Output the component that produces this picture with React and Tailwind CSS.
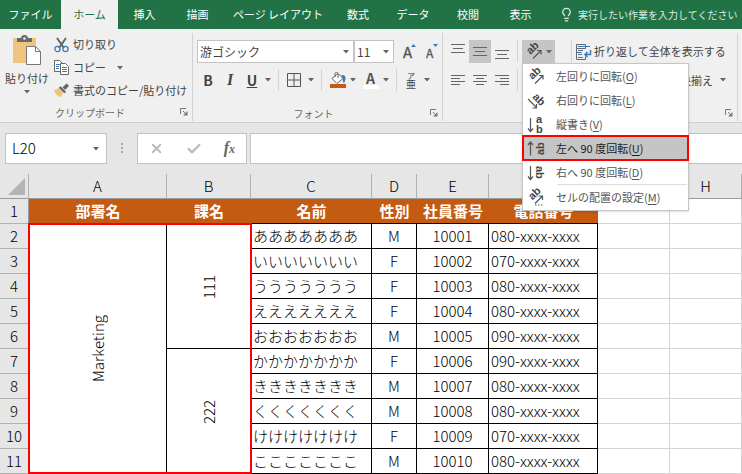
import React from 'react';
import { Check, X, Lightbulb } from 'lucide-react';

const tabs = ['ファイル', 'ホーム', '挿入', '描画', 'ページ レイアウト', '数式', 'データ', '校閲', '表示'];

const tabWidths = [
  'w-[61px]', 'w-[57px]', 'w-[53px]', 'w-[53px]', 'w-[108px]', 'w-[52px]', 'w-[58px]', 'w-[52px]', 'w-[53px]',
];

const rows = [
  { name: 'あああああああ', sex: 'M', no: '10001', tel: '080-xxxx-xxxx' },
  { name: 'いいいいいいい', sex: 'F', no: '10002', tel: '070-xxxx-xxxx' },
  { name: 'ううううううう', sex: 'F', no: '10003', tel: '080-xxxx-xxxx' },
  { name: 'えええええええ', sex: 'F', no: '10004', tel: '080-xxxx-xxxx' },
  { name: 'おおおおおおお', sex: 'M', no: '10005', tel: '090-xxxx-xxxx' },
  { name: 'かかかかかかか', sex: 'F', no: '10006', tel: '090-xxxx-xxxx' },
  { name: 'ききききききき', sex: 'M', no: '10007', tel: '080-xxxx-xxxx' },
  { name: 'くくくくくくく', sex: 'M', no: '10008', tel: '080-xxxx-xxxx' },
  { name: 'けけけけけけけ', sex: 'F', no: '10009', tel: '070-xxxx-xxxx' },
  { name: 'こここここここ', sex: 'M', no: '10010', tel: '080-xxxx-xxxx' },
];

const menuItems = [
  { icon: 'ccw', label: '左回りに回転', hotkey: 'O' },
  { icon: 'cw', label: '右回りに回転', hotkey: 'L' },
  { icon: 'vertical', label: '縦書き', hotkey: 'V' },
  { icon: 'up', label: '左へ 90 度回転', hotkey: 'U', selected: true },
  { icon: 'down', label: '右へ 90 度回転', hotkey: 'D' },
  { icon: 'format', label: 'セルの配置の設定', hotkey: 'M', separated: true },
];

const Caret = () => (
  <svg width="6" height="4" viewBox="0 0 6 4" className="shrink-0" aria-hidden="true">
    <path d="M0 0h6L3 3.5z" fill="#666" />
  </svg>
);

const CaretButton = ({ label, className = '' }) => (
  <button type="button" aria-label={label} className={`flex h-5 w-3 items-center justify-center ${className}`}>
    <Caret />
  </button>
);

const Divider = () => <div className="h-[22px] w-px shrink-0 bg-[#d2d2d2]" />;

const Launcher = ({ label }) => (
  <button type="button" aria-label={label}>
    <svg width="8" height="8" viewBox="0 0 8 8" fill="none" stroke="#777">
      <path d="M.5 6V.5H6M3 3l3 3" />
      <path d="M7.500 3v4.500H3z" fill="#777" stroke="none" />
    </svg>
  </button>
);

const orientationDrawings = {
  ccw: (
    <>
      <text transform="translate(5.500 12) rotate(-45)">ab</text>
      <path d="M8 15.500 15.500 8M12 7.500h4V11.500" />
    </>
  ),
  cw: (
    <>
      <text transform="translate(5 5.500) rotate(45)">ab</text>
      <path d="M1 7l8.500 8.500M9.500 12v4h-4" />
    </>
  ),
  vertical: (
    <>
      <path d="M3.500 2v13M1 12.500l2.500 3L6 12.500" />
      <text x="9" y="7">a</text>
      <text x="9" y="16.500">b</text>
    </>
  ),
  up: (
    <>
      <path d="M3.500 15.500V2M1 5l2.500-3L6 5" />
      <text transform="translate(16.500 15) rotate(-90)">ab</text>
    </>
  ),
  down: (
    <>
      <path d="M3.500 2v13M1 12.500l2.500 3L6 12.500" />
      <text transform="translate(8.500 2) rotate(90)">ab</text>
    </>
  ),
  format: (
    <>
      <text transform="translate(5.500 11.500) rotate(-45)">ab</text>
      <path d="M8 14.500 15 7.500M11.500 7h4v4" />
      <path d="M8 16h9" strokeDasharray="1.500 1.500" />
    </>
  ),
};

const OrientationIcon = ({ kind }) => (
  <svg
    width="17" height="17" viewBox="0 0 17 17" fill="none" stroke="#555" strokeWidth="1.200"
    className="shrink-0 overflow-visible font-['Liberation_Sans',sans-serif] [&_text]:fill-[#444] [&_text]:stroke-none [&_text]:text-[11px] [&_text]:font-bold"
    aria-hidden="true"
  >
    {orientationDrawings[kind]}
  </svg>
);

const AlignIcon = ({ d }) => (
  <svg width="14" height="15" viewBox="0 0 14 15" fill="none" stroke="#666" aria-hidden="true">
    <path d={d} />
  </svg>
);

const AlignButton = ({ label, d, active }) => (
  <button
    type="button"
    aria-label={label}
    className={`flex h-[23px] w-[22px] items-center justify-center ${active ? 'bg-[#c5c5c5]' : ''}`}
  >
    <AlignIcon d={d} />
  </button>
);

const PasteIcon = () => (
  <svg width="30" height="31" viewBox="0 0 30 31" aria-hidden="true">
    <path d="M1 3h23v25H1z" fill="#edc57f" />
    <path d="M5 7V3h4c0-4 7-4 7 0h4v4z" fill="#696969" />
    <circle cx="12.500" cy="3.500" r="1.300" fill="#f0f0f0" />
    <path d="M14.500 11.500h9l5 5v13h-14z" fill="#fff" stroke="#777" />
    <path d="M23.500 11.500v5h5" fill="none" stroke="#777" />
  </svg>
);

const CutIcon = () => (
  <svg width="15" height="16" viewBox="0 0 15 16" fill="none" aria-hidden="true">
    <path d="M3 1l7 10M12 1L5 11" stroke="#666" strokeWidth="2" />
    <circle cx="3.500" cy="12" r="2.600" stroke="#3f78bd" strokeWidth="1.300" />
    <circle cx="11.500" cy="12" r="2.600" stroke="#3f78bd" strokeWidth="1.300" />
  </svg>
);

const CopyIcon = () => (
  <svg width="15" height="15" viewBox="0 0 15 15" fill="#fff" stroke="#666" aria-hidden="true">
    <path d="M.5.5h5l3 3v8h-8z" />
    <path d="M2 4.500h4M2 6.500h3M2 8.500h3" stroke="#3f78bd" />
    <path d="M6.500 3.500h5l3 3v8h-8z" />
    <path d="M8 7.500h5M8 9.500h5M8 11.500h5" stroke="#3f78bd" />
  </svg>
);

const BrushIcon = () => (
  <svg width="15" height="15" viewBox="0 0 16 15" aria-hidden="true">
    <path d="M0 7l5-2 5 5-3 4.500C4 14 1 11 0 7z" fill="#edc57f" />
    <path d="M5 4.500L7 3l6 6-2 1.500z" fill="#666" />
    <path d="M9 4l4.500-4L16 2.500 12 7z" fill="#666" />
  </svg>
);

const ClipboardGroup = () => (
  <section aria-label="クリップボード" className="flex w-[192px] shrink-0 flex-col">
    <div className="flex h-[71px]">
      <button type="button" className="flex w-[54px] flex-col items-center self-start pt-[2px] leading-4">
        <PasteIcon />
        <span className="mt-1">貼り付け</span>
        <span className="mt-1"><Caret /></span>
      </button>
      <div className="flex flex-col">
        <button type="button" className="flex h-[23px] items-center gap-1"><CutIcon />切り取り</button>
        <div className="flex h-[23px] items-center gap-2">
          <button type="button" className="flex items-center gap-1"><CopyIcon />コピー</button>
          <CaretButton label="コピーのオプション" />
        </div>
        <button type="button" className="flex h-[23px] items-center gap-1"><BrushIcon />書式のコピー/貼り付け</button>
      </div>
    </div>
    <div className="flex h-4 items-center pr-1 text-[10px] text-[#666]">
      <span className="flex-1 text-center">クリップボード</span>
      <Launcher label="クリップボードの詳細" />
    </div>
  </section>
);

const PickList = ({ label, value, className }) => (
  <div className={`relative flex items-center border border-[#c3c3c3] bg-white ${className}`}>
    <select aria-label={label} className="h-full w-full appearance-none bg-transparent px-[2px] text-xs outline-none">
      <option>{value}</option>
    </select>
    <span className="pointer-events-none absolute right-1"><Caret /></span>
  </div>
);

const FontGroup = () => (
  <section aria-label="フォント" className="flex w-[249px] shrink-0 flex-col pl-1">
    <div className="flex h-7 items-start">
      <PickList label="フォント名" value="游ゴシック" className="h-[23px] w-[157px]" />
      <PickList label="フォント サイズ" value="11" className="h-[23px] w-[40px]" />
      <button type="button" aria-label="フォント サイズの拡大" className="ml-1 flex h-[23px] w-[22px] items-center justify-center">
        <svg width="15" height="18" viewBox="0 0 15 18" className="overflow-visible">
          <text x="1" y="15" fontSize="15" fill="#555" stroke="#555" strokeWidth=".3">A</text>
          <path d="M9 4l2.500-3L14 4z" fill="#3f78bd" />
        </svg>
      </button>
      <button type="button" aria-label="フォント サイズの縮小" className="flex h-[23px] w-[22px] items-center justify-center">
        <svg width="15" height="18" viewBox="0 0 15 18" className="overflow-visible">
          <text x="2" y="15" fontSize="12" fill="#555" stroke="#555" strokeWidth=".3">A</text>
          <path d="M9 1h5l-2.500 3z" fill="#3f78bd" />
        </svg>
      </button>
    </div>
    <div className="flex h-7 items-center pl-px text-sm text-[#444]">
      <button type="button" className="w-[20px] font-bold">B</button>
      <button type="button" className="w-[24px] font-['Liberation_Serif',serif] text-base font-bold italic">I</button>
      <button type="button" className="w-[20px] font-bold underline">U</button>
      <CaretButton label="下線の種類" className="mr-1" />
      <Divider />
      <button type="button" aria-label="罫線" className="ml-2">
        <svg width="14" height="14" viewBox="0 0 14 14" fill="none" stroke="#555">
          <path d="M.5.5h13v13H.5zM7 .5v13M.5 7h13" />
        </svg>
      </button>
      <CaretButton label="罫線の種類" className="mx-1" />
      <Divider />
      <button type="button" aria-label="塗りつぶしの色" className="ml-2">
        <svg width="16" height="16" viewBox="0 0 16 16" fill="none">
          <path d="M2 6.500l6-5 5 5-6 5z" fill="#fff" stroke="#666" />
          <path d="M5 5V1.500C5 0 8 0 8 1.500V6" stroke="#666" />
          <path d="M11 3c6-1 5 5 3 8-2-1 0-5-3-8z" fill="#3f78bd" />
          <path d="M0 12h16v4H0z" fill="#c55a11" />
        </svg>
      </button>
      <CaretButton label="塗りつぶしの色を選択" className="ml-px mr-1" />
      <button type="button" aria-label="フォントの色">
        <svg width="16" height="17" viewBox="0 0 16 17" className="overflow-visible">
          <text x="3" y="12" fontSize="14" fontWeight="700" fill="#555">A</text>
          <path d="M0 13h16v4H0z" fill="#fff" />
        </svg>
      </button>
      <CaretButton label="フォントの色を選択" className="ml-px mr-1" />
      <Divider />
      <button type="button" aria-label="ふりがなの表示" className="ml-2 flex w-3 flex-col items-center">
        <span className="text-[8px] leading-[7px]">ア</span>
        <span className="text-[10px] leading-[10px]">亜</span>
      </button>
      <CaretButton label="ふりがなのオプション" className="ml-1" />
    </div>
    <div className="mt-3 flex h-4 items-center pr-1 text-[10px] text-[#666]">
      <span className="flex-1 text-center">フォント</span>
      <Launcher label="フォントの詳細" />
    </div>
  </section>
);

const OrientationMenu = () => (
  <ul
    role="menu"
    className="absolute left-0 top-full z-10 w-[167px] border border-[#c6c6c6] bg-white pb-px shadow-sm"
  >
    {menuItems.map((item) => (
      <li key={item.icon} role="none">
        {item.separated && <div className="ml-[34px] mr-px h-px bg-[#dcdcdc]" />}
        <button
          type="button"
          role="menuitem"
          className={`flex h-6 w-full items-center gap-3 whitespace-nowrap px-1 text-[11px] ${
            item.selected
              ? 'bg-[#c5c5c5] text-[#222] outline-2 -outline-offset-1 outline-[#f00]'
              : 'text-[#555]'
          }`}
        >
          <OrientationIcon kind={item.icon} />
          <span>{item.label}(<u className="underline-offset-2">{item.hotkey}</u>)</span>
        </button>
      </li>
    ))}
  </ul>
);

const AlignmentGroup = () => (
  <section aria-label="配置" className="flex w-[294px] shrink-0 flex-col pl-1">
    <div className="flex h-7 items-start">
      <AlignButton label="上揃え" d="M0 .5h14M2 4.500h10M0 8.500h14" />
      <AlignButton label="上下中央揃え" d="M0 3.500h14M2 7.500h10M0 11.500h14" active />
      <AlignButton label="下揃え" d="M0 6.500h14M2 10.500h10M0 14.500h14" />
      <div className="ml-1"><Divider /></div>
      <div className="relative ml-1">
        <button
          type="button"
          aria-label="方向"
          aria-expanded="true"
          className="flex h-[23px] w-[33px] items-center justify-center gap-1 bg-[#c5c5c5]"
        >
          <OrientationIcon kind="ccw" />
          <Caret />
        </button>
        <OrientationMenu />
      </div>
      <div className="ml-4 mr-1"><Divider /></div>
      <button type="button" className="flex h-[23px] items-center gap-[2px]">
        <svg width="16" height="16" viewBox="0 0 16 16" fill="none" stroke="#666" aria-hidden="true">
          <path d="M.5.500h9v4h-9zM.5 4.500v11h9v-3M.5 8.500h5" />
          <path d="M2 2.500h12M2 6.500h5M2 10.500h4M2 13.500h5" stroke="#3f78bd" />
          <path d="M14.500 6v4.500H9M11.500 8L9 10.500l2.500 2.500" stroke="#3f78bd" strokeWidth="1.500" />
        </svg>
        折り返して全体を表示する
      </button>
    </div>
    <div className="flex h-7 items-center">
      <AlignButton label="左揃え" d="M0 2.500h14M0 5.500h9M0 8.500h14M0 11.500h9" />
      <AlignButton label="中央揃え" d="M0 2.500h14M3 5.500h8M0 8.500h14M3 11.500h8" />
      <AlignButton label="右揃え" d="M0 2.500h14M5 5.500h9M0 8.500h14M5 11.500h9" />
      <div className="ml-1"><Divider /></div>
      <button type="button" className="ml-auto">セルを結合して中央揃え</button>
      <CaretButton label="結合のオプション" className="ml-1 mr-2" />
    </div>
    <div className="mt-3 flex h-4 items-center justify-end pr-1">
      <Launcher label="配置の詳細" />
    </div>
  </section>
);

const GroupBorder = () => <div className="-mt-[7px] w-px shrink-0 bg-[#d2d2d2]" />;

const Ribbon = () => (
  <div className="flex h-[94px] whitespace-nowrap border-b border-[#cfcfcf] bg-[#f0f0f0] pb-px pt-[11px] text-[11px] text-[#444]">
    <div className="-mt-[7px] flex"><ClipboardGroup /></div>
    <GroupBorder />
    <FontGroup />
    <GroupBorder />
    <AlignmentGroup />
    <GroupBorder />
  </div>
);

const FormulaBar = () => (
  <div className="flex h-[51px] items-start bg-[#e6e6e6] pl-[5px] pt-[10px]">
    <div className="flex h-[31px] w-[102px] shrink-0 items-center border border-[#c3c3c3] bg-white">
      <input aria-label="名前ボックス" defaultValue="L20" className="min-w-0 flex-1 bg-transparent pl-[6px] text-[15px] font-light outline-none" />
      <CaretButton label="名前の一覧" className="mr-1" />
    </div>
    <svg width="30" height="31" viewBox="0 0 30 31" className="shrink-0" fill="#aaa" aria-hidden="true">
      <path d="M14 10h2v2h-2zM14 14h2v2h-2zM14 18h2v2h-2z" />
    </svg>
    <div className="flex h-[31px] w-[110px] shrink-0 items-center justify-around border border-[#c3c3c3] bg-white text-[#bbb]">
      <button type="button" aria-label="キャンセル"><X size={15} strokeWidth={3} /></button>
      <button type="button" aria-label="入力"><Check size={16} strokeWidth={3.5} /></button>
      <button type="button" aria-label="関数の挿入" className="font-['Liberation_Serif',serif] text-base font-bold italic leading-4 text-[#666]">
        f<span className="text-xs">x</span>
      </button>
    </div>
    <input aria-label="数式バー" className="ml-[3px] h-[31px] min-w-0 flex-1 border border-r-0 border-[#c3c3c3] bg-white px-2 outline-none" />
  </div>
);

const headCell = 'border-b border-r border-b-[#9b9b9b] border-r-[#b1b1b1] p-0 font-light';
const titleCell = 'border-b border-b-black bg-[#c55a11] p-0 font-bold text-white';
const dataCell = 'border-b border-r border-black p-0';
const emptyCell = 'border-b border-r border-[#d4d4d4] p-0';

const RowHead = ({ children }) => (
  <th scope="row" className="border-b border-r border-b-[#b1b1b1] border-r-[#9b9b9b] bg-[#e6e6e6] p-0 font-light">
    {children}
  </th>
);

const Sheet = () => (
  <div className="relative">
    <table className="w-full table-fixed border-separate border-spacing-0 text-center text-[15px] font-light leading-6 text-black">
      <colgroup>
        <col className="w-[29px]" />
        <col className="w-[138px]" />
        <col className="w-[84px]" />
        <col className="w-[121px]" />
        <col className="w-[45px]" />
        <col className="w-[72px]" />
        <col className="w-[109px]" />
        <col className="w-[72px]" />
        <col />
      </colgroup>
      <thead>
        <tr className="h-[25px] bg-[#e6e6e6]">
          <td className={headCell}>
            <svg width="17" height="17" viewBox="0 0 17 17" className="ml-2" aria-hidden="true">
              <path d="M17 0v17H0z" fill="#b4b4b4" />
            </svg>
          </td>
          {['A', 'B', 'C', 'D', 'E', 'F', 'G', 'H'].map((letter) => (
            <th key={letter} scope="col" className={headCell}>{letter}</th>
          ))}
        </tr>
      </thead>
      <tbody>
        <tr className="h-[25px]">
          <RowHead>1</RowHead>
          {['部署名', '課名', '名前', '性別', '社員番号', '電話番号'].map((title) => (
            <td key={title} className={titleCell}>{title}</td>
          ))}
          <td className={emptyCell} />
          <td className={emptyCell} />
        </tr>
        {rows.map((row, index) => (
          <tr key={row.no} className="h-[25px]">
            <RowHead>{index + 2}</RowHead>
            {index === 0 && (
              <td rowSpan={10} className={dataCell}>
                <span className="inline-block rotate-180 align-middle [writing-mode:vertical-rl]">Marketing</span>
              </td>
            )}
            {index % 5 === 0 && (
              <td rowSpan={5} className={dataCell}>
                <span className="inline-block rotate-180 align-middle [writing-mode:vertical-rl]">
                  {index === 0 ? '111' : '222'}
                </span>
              </td>
            )}
            <td className={`${dataCell} pl-[2px] text-left`}>{row.name}</td>
            <td className={dataCell}>{row.sex}</td>
            <td className={dataCell}>{row.no}</td>
            <td className={`${dataCell} pl-[2px] text-left`}>{row.tel}</td>
            <td className={emptyCell} />
            <td className={emptyCell} />
          </tr>
        ))}
      </tbody>
    </table>
    {/* Outline around the merged cells */}
    <div className="pointer-events-none absolute bottom-0 left-[28px] top-[49px] w-[224px] border-2 border-[#f00]" />
  </div>
);

const App = () => (
  <div className="overflow-hidden bg-white font-['Noto_Sans_CJK_JP',sans-serif]">
    <nav className="flex h-[29px] items-stretch whitespace-nowrap bg-[#217346] text-[11px] text-white">
      {tabs.map((tab, index) => (
        <button
          key={tab}
          type="button"
          className={`shrink-0 ${tabWidths[index]} ${tab === 'ホーム' ? 'bg-[#f0f0f0] text-[#217346]' : ''}`}
        >
          {tab}
        </button>
      ))}
      <button type="button" className="ml-3 flex items-center gap-1 text-[10px] text-[#dcebe2]">
        <Lightbulb size={15} strokeWidth={2} />
        実行したい作業を入力してください
      </button>
    </nav>
    <Ribbon />
    <FormulaBar />
    <Sheet />
  </div>
);

export default App;
